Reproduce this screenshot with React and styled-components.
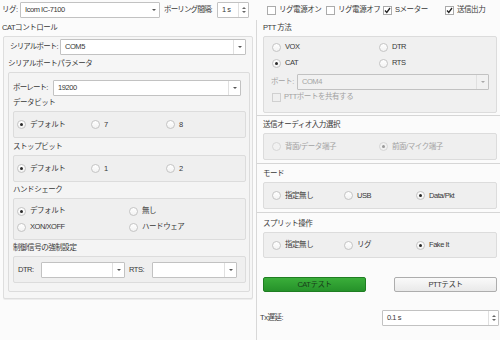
import React from "react";
import styled, { createGlobalStyle, css } from "styled-components";

const Global = createGlobalStyle`
  html, body { margin: 0; padding: 0; background: #fbfbfb; }
  #root { width: 500px; height: 340px; overflow: hidden; }
`;

const Page = styled.div`
  width: 500px;
  height: 340px;
  display: flex;
  flex-direction: column;
  background: #fbfbfb;
  font-family: "Liberation Sans", "Noto Sans CJK JP", sans-serif;
  font-size: 7.5px;
  letter-spacing: -0.45px;
  color: #383838;
  line-height: 10px;
`;

const TopBar = styled.div`
  height: 20px;
  flex: none;
  display: flex;
  align-items: center;
  padding-left: 2px;
`;

const Text = styled.span`
  white-space: nowrap;
  flex: none;
  width: ${(p) => (p.$w ? `${p.$w}px` : "auto")};
  margin-left: ${(p) => p.$ml || 0}px;
  letter-spacing: ${(p) => (p.$tight ? "-0.85px" : "inherit")};
  color: ${(p) => (p.$disabled ? "#a2a2a2" : "#383838")};
`;

const Combo = styled.div`
  box-sizing: border-box;
  height: ${(p) => p.$h || 16}px;
  display: flex;
  align-items: center;
  flex: ${(p) => (p.$w ? "none" : "1")};
  width: ${(p) => (p.$w ? `${p.$w}px` : "auto")};
  margin-left: ${(p) => p.$ml || 0}px;
  margin-right: ${(p) => p.$mr || 0}px;
  border: 1px solid #c2c2c2;
  border-radius: 1px;
  background: ${(p) => (p.$disabled ? "#f1f1f1" : "#ffffff")};
  color: ${(p) => (p.$disabled ? "#a4a4a4" : "#383838")};
`;

const ComboText = styled.span`
  flex: 1;
  padding-left: 4px;
  white-space: nowrap;
`;

const ArrowBox = styled.span`
  width: 11px;
  align-self: stretch;
  display: flex;
  align-items: center;
  justify-content: center;
  border-left: 1px solid ${(p) => (p.$sep ? "#e0e0e0" : "transparent")};
  &::after {
    content: "";
    border-left: 2px solid transparent;
    border-right: 2px solid transparent;
    border-top: 2px solid ${(p) => (p.$disabled ? "#a8a8a8" : "#555")};
  }
`;

const SpinBox = styled.span`
  width: 9px;
  align-self: stretch;
  display: flex;
  flex-direction: column;
  align-items: center;
  justify-content: center;
  gap: 2px;
  border-left: 1px solid #e0e0e0;
`;

const SpinUp = styled.span`
  border-left: 2px solid transparent;
  border-right: 2px solid transparent;
  border-bottom: 2px solid #666;
`;

const SpinDown = styled.span`
  border-left: 2px solid transparent;
  border-right: 2px solid transparent;
  border-top: 2px solid #666;
`;

const CheckItem = styled.div`
  display: flex;
  align-items: center;
  gap: 2px;
  width: ${(p) => (p.$w ? `${p.$w}px` : "auto")};
  flex: none;
  margin-left: ${(p) => p.$ml || 0}px;
  color: ${(p) => (p.$disabled ? "#a2a2a2" : "#383838")};
`;

const CheckBox = styled.span`
  box-sizing: border-box;
  width: 9px;
  height: 9px;
  flex: none;
  border: 1px solid ${(p) => (p.$disabled ? "#d0d0d0" : "#ababab")};
  background: ${(p) => (p.$disabled ? "#efefef" : "#ffffff")};
  display: flex;
  align-items: center;
  justify-content: center;
  margin-right: 1px;
`;

const Body = styled.div`
  flex: 1;
  display: flex;
  min-height: 0;
`;

const LeftCol = styled.div`
  width: 256px;
  flex: none;
  box-sizing: border-box;
  padding-left: 3px;
  display: flex;
  flex-direction: column;
`;

const RightCol = styled.div`
  flex: 1;
  box-sizing: border-box;
  border-left: 1px solid #d8d8d8;
  padding: 0 7px 0 6px;
  display: flex;
  flex-direction: column;
`;

const Title = styled.div`
  height: ${(p) => p.$h}px;
  flex: none;
  box-sizing: border-box;
  display: flex;
  align-items: flex-end;
  padding-bottom: 3px;
  margin-left: ${(p) => p.$ml || 0}px;
  white-space: nowrap;
`;

const OuterBox = styled.div`
  width: 250px;
  box-sizing: border-box;
  border: 1px solid #dedede;
  border-radius: 2px;
  background: #f6f6f6;
  padding: 2px 2px 6px 4px;
  display: flex;
  flex-direction: column;
  box-shadow: 0 1px 0 #ededed;
`;

const InnerBox = styled.div`
  box-sizing: border-box;
  border: 1px solid #dcdcdc;
  border-radius: 2px;
  background: #f4f4f4;
  padding: 7px 3px 8px 4px;
  display: flex;
  flex-direction: column;
`;

const FieldRow = styled.div`
  height: ${(p) => p.$h || 16}px;
  flex: none;
  display: flex;
  align-items: center;
  padding-left: ${(p) => p.$pl || 0}px;
  margin-top: ${(p) => p.$mt || 0}px;
`;

const OptionBox = styled.div`
  box-sizing: border-box;
  height: ${(p) => p.$h || 27}px;
  flex: none;
  border: 1px solid #dcdcdc;
  border-radius: 2px;
  background: #efefef;
  padding: ${(p) => p.$pad || "0 3px"};
  display: grid;
  grid-template-columns: ${(p) => p.$cols};
  grid-auto-rows: ${(p) => p.$row || "1fr"};
  align-items: center;
  align-content: ${(p) => p.$align || "stretch"};
`;

const PttBox = styled.div`
  box-sizing: border-box;
  height: 77px;
  flex: none;
  border: 1px solid #dcdcdc;
  border-radius: 2px;
  background: #f0f0f0;
  padding: 2px 7px 0 6px;
  display: flex;
  flex-direction: column;
`;

const RadioGrid = styled.div`
  display: grid;
  grid-template-columns: 107px 107px;
  grid-auto-rows: 16px;
  align-items: center;
  padding-left: 2px;
`;

const RadioItem = styled.div`
  display: flex;
  align-items: center;
  gap: 4px;
  white-space: nowrap;
  color: ${(p) => (p.$disabled ? "#a2a2a2" : "#383838")};
`;

const RadioDot = styled.span`
  box-sizing: border-box;
  width: 9px;
  height: 9px;
  flex: none;
  border-radius: 50%;
  border: 1px solid ${(p) => (p.$disabled ? "#d6d6d6" : "#c4c4c4")};
  background: ${(p) => (p.$disabled ? "#f1f1f1" : "linear-gradient(#ffffff, #f2f2f2)")};
  display: flex;
  align-items: center;
  justify-content: center;
  ${(p) =>
    p.$checked &&
    css`
      &::after {
        content: "";
        width: 3px;
        height: 3px;
        border-radius: 50%;
        background: ${p.$disabled ? "#999" : "#2a2a2a"};
      }
    `}
`;

const Section = styled.div`
  flex: none;
  display: flex;
  flex-direction: column;
  padding-bottom: ${(p) => p.$pb || 0}px;
  margin: 0 -7px 0 -6px;
  padding-left: 6px;
  padding-right: 7px;
  border-bottom: ${(p) => (p.$line ? "1px solid #d6d6d6" : "none")};
`;

const ButtonRow = styled.div`
  margin-top: 19px;
  height: 15px;
  flex: none;
  display: grid;
  grid-template-columns: 103px 103px;
  justify-content: space-between;
`;

const Button = styled.div`
  box-sizing: border-box;
  display: flex;
  align-items: center;
  justify-content: center;
  border-radius: 2px;
  white-space: nowrap;
  ${(p) =>
    p.$green
      ? css`
          background: linear-gradient(#3aae3a, #26922a);
          border: 1px solid #1f7e22;
          color: #183c1a;
        `
      : css`
          background: linear-gradient(#fafafa, #e9e9e9);
          border: 1px solid #adadad;
          color: #383838;
        `}
`;

const TxRow = styled.div`
  margin-top: 18px;
  height: 16px;
  flex: none;
  display: flex;
  align-items: center;
  justify-content: space-between;
  margin-left: -3px;
  margin-right: -2px;
`;

const CheckMark = () => (
  <svg width="7" height="7" viewBox="0 0 7 7">
    <polyline points="1,3.5 2.8,5.5 6,1" fill="none" stroke="#222" strokeWidth="1.3" />
  </svg>
);

const Radio = ({ label, checked, disabled }) => (
  <RadioItem $disabled={disabled}>
    <RadioDot $checked={checked} $disabled={disabled} />
    {label}
  </RadioItem>
);

const Check = ({ label, checked, disabled, w, ml }) => (
  <CheckItem $w={w} $ml={ml} $disabled={disabled}>
    <CheckBox $disabled={disabled}>{checked && <CheckMark />}</CheckBox>
    {label}
  </CheckItem>
);

const Select = ({ value, w, ml, mr, disabled, sep = true }) => (
  <Combo $w={w} $ml={ml} $mr={mr} $disabled={disabled}>
    <ComboText>{value}</ComboText>
    <ArrowBox $sep={sep} $disabled={disabled} />
  </Combo>
);

const Spin = ({ value, w, ml }) => (
  <Combo $w={w} $ml={ml}>
    <ComboText>{value}</ComboText>
    <SpinBox>
      <SpinUp />
      <SpinDown />
    </SpinBox>
  </Combo>
);

export default function App() {
  return (
    <Page>
      <Global />
      <TopBar>
        <Text $w={18}>リグ:</Text>
        <Select value="Icom IC-7100" w={140} sep={false} />
        <Text $ml={4} $w={53} $tight>ポーリング間隔:</Text>
        <Spin value="1 s" w={32} />
        <Check label="リグ電源オン" w={59} ml={18} />
        <Check label="リグ電源オフ" w={57} />
        <Check label="Sメーター" checked w={62} />
        <Check label="送信出力" checked />
      </TopBar>
      <Body>
        <LeftCol>
          <Title $h={16} $ml={-1}>CATコントロール</Title>
          <OuterBox>
            <FieldRow $pl={2}>
              <Text $w={50} $tight>シリアルポート:</Text>
              <Select value="COM5" mr={4} />
            </FieldRow>
            <Title $h={17}>シリアルポートパラメータ</Title>
            <InnerBox>
              <FieldRow>
                <Text $w={40} $tight>ボーレート:</Text>
                <Select value="19200" mr={5} />
              </FieldRow>
              <Title $h={15}>データビット</Title>
              <OptionBox $cols="74px 75px 75px">
                <Radio label="デフォルト" checked />
                <Radio label="7" />
                <Radio label="8" />
              </OptionBox>
              <Title $h={17}>ストップビット</Title>
              <OptionBox $cols="74px 75px 75px">
                <Radio label="デフォルト" checked />
                <Radio label="1" />
                <Radio label="2" />
              </OptionBox>
              <Title $h={16}>ハンドシェーク</Title>
              <OptionBox $h={42} $cols="112px 112px" $row="16px" $align="center">
                <Radio label="デフォルト" checked />
                <Radio label="無し" />
                <Radio label="XON/XOFF" />
                <Radio label="ハードウェア" />
              </OptionBox>
              <Title $h={16}>制御信号の強制設定</Title>
              <OptionBox $cols="23px 84px 4px 23px 85px" $pad="0 4px">
                <Text>DTR:</Text>
                <Select value="" />
                <span />
                <Text>RTS:</Text>
                <Select value="" />
              </OptionBox>
            </InnerBox>
          </OuterBox>
        </LeftCol>
        <RightCol>
          <Section $pb={2} $line>
            <Title $h={16}>PTT 方法</Title>
            <PttBox>
              <RadioGrid>
                <Radio label="VOX" />
                <Radio label="DTR" />
                <Radio label="CAT" checked />
                <Radio label="RTS" />
              </RadioGrid>
              <FieldRow $mt={3} $pl={1}>
                <Text $w={26} $disabled>ポート:</Text>
                <Select value="COM4" disabled />
              </FieldRow>
              <FieldRow $pl={2} $h={14}>
                <Check label="PTTポートを共有する" disabled />
              </FieldRow>
            </PttBox>
          </Section>
          <Section $pb={3} $line>
            <Title $h={17}>送信オーディオ入力選択</Title>
            <OptionBox $cols="107px 107px" $pad="0 8px">
              <Radio label="背面/データ端子" disabled />
              <Radio label="前面/マイク端子" checked disabled />
            </OptionBox>
          </Section>
          <Section $pb={3} $line>
            <Title $h={18}>モード</Title>
            <OptionBox $cols="72px 72px 72px" $pad="0 8px">
              <Radio label="指定無し" />
              <Radio label="USB" />
              <Radio label="Data/Pkt" checked />
            </OptionBox>
          </Section>
          <Section>
            <Title $h={19}>スプリット操作</Title>
            <OptionBox $h={26} $cols="72px 72px 72px" $pad="0 8px">
              <Radio label="指定無し" />
              <Radio label="リグ" />
              <Radio label="Fake It" checked />
            </OptionBox>
          </Section>
          <ButtonRow>
            <Button $green>CATテスト</Button>
            <Button>PTTテスト</Button>
          </ButtonRow>
          <TxRow>
            <Text>Tx遅延:</Text>
            <Spin value="0.1 s" w={117} />
          </TxRow>
        </RightCol>
      </Body>
    </Page>
  );
}
